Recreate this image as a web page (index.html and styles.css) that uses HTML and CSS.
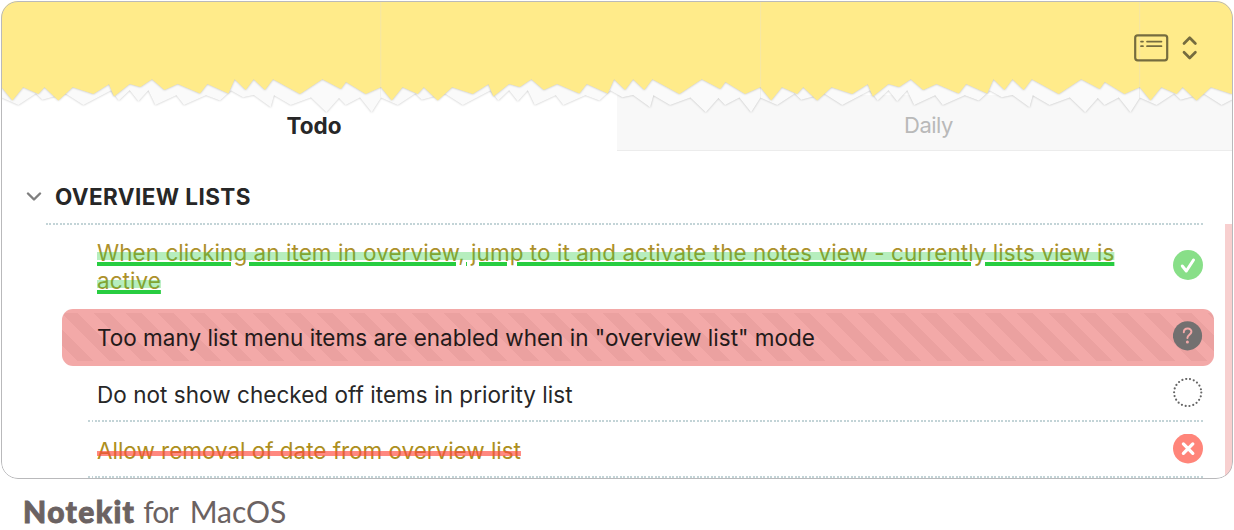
FILE: index.html
```html
<!DOCTYPE html>
<html lang="en">
<head>
<meta charset="utf-8">
<title>Notekit for MacOS</title>
<link rel="stylesheet" href="styles.css">
</head>
<body>
<figure class="figure">
  <div class="window">
    <header class="top">
      <svg class="paper" width="1232" height="120" viewBox="1 1 1232 120" aria-hidden="true">
        <defs>
          <path id="sheet" d="M0 0V97.6L17 105 34.500 93.500 41 99.700 64 93.500 82 105 109.600 90.600 117.500 100.600 128.300 90.300 137 101.300 147 90.300 154 105 175 95.300 182.600 105 204.600 95.300 218.600 100.600 229.600 90.600 241.600 97.300 252.300 95 269.300 107.300 272.600 95.300 289.300 105 309.600 97.600 325 112.300 337.600 98 344.300 105 358.600 97.600 370.300 112.300 379.400 98V0Z"/>
          <path id="strip" d="M0 0V87L11 100.600 21.700 87.300 37 94 43 87.300 57 100.600 71.300 87.300 92 94 107.600 84.300 112.600 96.600 128.300 84 139 87 150.600 79.300 163 90 176.300 84 198.600 93.600 206 84 227 93.600 233.300 79.300 244.300 90 252.300 79.300 263.600 90 271.600 79.300 298.600 94 321 79.300 339.600 89 344.600 82 364.300 94 379.400 87.300V0Z"/>
        </defs>
        <g class="sheets">
          <use href="#sheet" x="1.4"/><use href="#sheet" x="380.800"/><use href="#sheet" x="760.200"/><use href="#sheet" x="1139.600"/>
        </g>
        <g class="strips">
          <use href="#strip" x="1.4"/><use href="#strip" x="380.800"/><use href="#strip" x="760.200"/><use href="#strip" x="1139.600"/>
        </g>
        <path class="seams" d="M380.800 1V87M760.600 1V87M1139.700 1V87"/>
        <g class="tool">
          <rect x="1135.200" y="35.300" width="32" height="25" rx="2.500"/>
          <path class="tool-lines" d="M1141 41.600h2M1147 41.600h14.500M1141 46.200h2M1147 46.200h14.500"/>
          <path class="tool-arrows" d="M1184 43.500l5.700-5.700 5.700 5.700M1184 52.300l5.700 5.700 5.700-5.700"/>
        </g>
      </svg>
    </header>
    <nav class="tabs">
      <div class="tab tab-active"><span>Todo</span></div>
      <div class="tab"><span>Daily</span></div>
    </nav>
    <main class="content">
      <div class="heading">
        <svg width="16" height="10" viewBox="0 0 16 10"><path d="M2 1.500l6 6 6-6"/></svg>
        <h1>OVERVIEW LISTS</h1>
      </div>
      <div class="dots"></div>
      <div class="row row-tall">
        <p><span class="mark-line"><span class="mark"><span class="text">When clicking an item in overview, jump to it and activate the notes view - currently lists view is<br>active</span></span></span></p>
        <svg class="badge" width="30" height="30" viewBox="0 0 30 30"><circle cx="15" cy="15" r="15" fill="#88df88"/><path d="M9.300 16l4 5 7.200-11" fill="none" stroke="#fff" stroke-width="3" stroke-linecap="round" stroke-linejoin="round"/></svg>
      </div>
      <div class="row row-hot">
        <p>Too many list menu items are enabled when in "overview list" mode</p>
        <svg class="badge" width="30" height="30" viewBox="0 0 30 30"><circle cx="14.500" cy="14.800" r="14.600" fill="#727070"/><path d="M10.800 11.200c.2-5 8-4.600 7.600-.3-.3 2.900-4 3-4 6.200" fill="none" stroke="#f3a9a8" stroke-width="2" stroke-linecap="round"/><circle cx="14.400" cy="20.900" r="1.500" fill="#f3a9a8"/></svg>
      </div>
      <div class="row row-plain">
        <p>Do not show checked off items in priority list</p>
        <svg class="badge" width="30" height="30" viewBox="0 0 30 30"><circle cx="14.700" cy="14.500" r="13.600" fill="none" stroke="#666" stroke-width="2.200" stroke-linecap="round" stroke-dasharray="0 3.884"/></svg>
      </div>
      <div class="dots dots-item"></div>
      <div class="row row-plain">
        <p><span class="cut"><span class="text">Allow removal of date from overview list</span></span></p>
        <svg class="badge" width="30" height="30" viewBox="0 0 30 30"><circle cx="15" cy="14.500" r="15" fill="#ff857a"/><path d="M10.400 9.900l9.400 9.400m0-9.400l-9.400 9.400" stroke="#fff" stroke-width="3.300" stroke-linecap="round"/></svg>
      </div>
      <div class="dots dots-item"></div>
      <div class="scrollbar"></div>
    </main>
  </div>
  <figcaption class="caption"><b>Notekit</b><span class="for">for</span><span class="mac">MacOS</span></figcaption>
</figure>
</body>
</html>
```

FILE: styles.css
```css
* { box-sizing: border-box; }
body { margin: 0; background: #fff; font-family: Inter, "Liberation Sans", sans-serif; font-size: 22.500px; color: #272727; }
.figure { margin: 0; padding: 1px; width: 1234px; height: 530px; overflow: hidden; }
.window { position: relative; width: 1232px; height: 478px; border-radius: 17px; overflow: hidden; background: #fff; }
.window::after { content: ""; position: absolute; inset: 0; border: 1px solid #b9b9bb; border-radius: 17px; pointer-events: none; z-index: 2; }

.top { height: 94px; position: relative; z-index: 1; }
.paper { display: block; overflow: visible; }
.sheets { fill: #fafafa; filter: drop-shadow(0 0 1.300px rgba(0, 0, 0, .26)); }
.strips { fill: #ffeb8a; filter: drop-shadow(0 0 1.300px rgba(0, 0, 0, .28)); }
.seams { stroke: #f8e8a4; stroke-width: 1; }
.tool { fill: none; stroke: #756c3f; stroke-width: 2.200; stroke-linecap: round; stroke-linejoin: round; }
.tool-lines { stroke-width: 1.700; }
.tool-arrows { stroke-width: 2.700; }

.tabs { display: grid; grid-template-columns: 616px 1fr; height: 56px; }
.tab { display: flex; justify-content: center; padding-top: 14px; line-height: 32px; background: #f8f8f8; border-bottom: 1px solid #ececec; color: #b9b9b9; }
.tab-active { background: #fff; border-color: #fff; color: #272727; font-weight: 700; padding: 15px 0 0 10px; }
.tab:last-child { padding-left: 7px; font-size: 22px; letter-spacing: -.5px; }

.content { position: relative; height: 328px; }
.heading { display: flex; align-items: center; gap: 13px; height: 72px; padding: 20px 0 0 25px; }
.heading svg { fill: none; stroke: #7f7f7f; stroke-width: 2.400; stroke-linecap: round; stroke-linejoin: round; }
.heading h1 { margin: 0; font-size: 22.500px; font-weight: 700; line-height: 32px; letter-spacing: .4px; white-space: nowrap; }
.dots { height: 2px; margin: 0 30px 0 45px; background: repeating-linear-gradient(90deg, #c3d4d7 0 1.800px, #fff 1.800px 3.500px); }
.dots-item { margin-left: 87px; }
.row { display: flex; align-items: center; justify-content: space-between; height: 54px; padding: 0 30px 0 96px; }
.row p { margin: 0; white-space: nowrap; line-height: 28px; letter-spacing: .04px; }
.row-tall { height: 84px; }
.row-tall .badge { margin-bottom: 4px; }
.row-plain p { padding-top: 3px; }
.row-hot { height: 57px; margin: 0 19px 0 61px; padding: 0 11px 0 35px; border-radius: 11px; background: repeating-linear-gradient(45deg, transparent 0 11.250px, #eba1a0 11.250px 22.500px) 0 4px / 100% 48px no-repeat, #f3a9a8; color: #241a1a; }
.row-hot p { letter-spacing: .01px; }
.row-hot .badge { margin-bottom: 4px; }
.badge { flex: none; }
.mark-line { color: #ad912b; text-decoration: underline 4px #28cd41; text-underline-offset: 1px; }
/* The wrappers' larger font size lowers their strike line; .text restores the size. */
.mark, .cut { line-height: 0; }
.mark { font-size: 26.500px; text-decoration: line-through 8px rgba(40, 205, 65, .34); }
.cut { font-size: 25px; color: #ad8f20; text-decoration: line-through 4.500px rgba(255, 72, 60, .65); letter-spacing: -.03px; }
.text { font-size: 22.500px; }
.scrollbar { position: absolute; right: 1px; top: 73px; bottom: 0; width: 7px; background: #f8cfcf; }

.caption { display: flex; align-items: baseline; padding-left: 22px; font: 30px/36px Lato, sans-serif; color: #6b6262; margin-top: 14px; }
.caption b { font-weight: 900; letter-spacing: 1.400px; -webkit-text-stroke: .9px #6b6262; }
.for { margin-left: 8px; letter-spacing: -1.200px; }
.mac { margin-left: 12px; }
```
